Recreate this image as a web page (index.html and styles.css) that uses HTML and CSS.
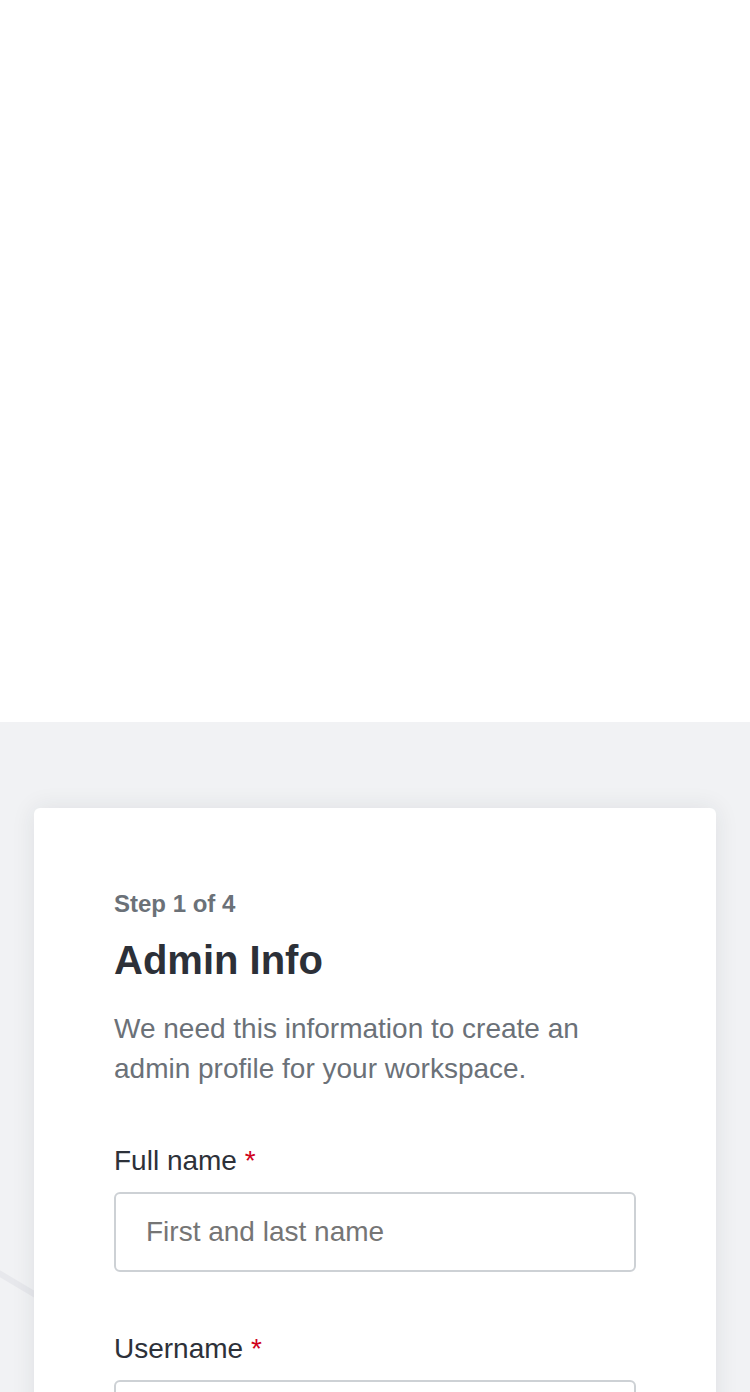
FILE: index.html
```html
<!DOCTYPE html>
<html lang="en">
<head>
<meta charset="utf-8">
<title>Admin Info</title>
<link rel="stylesheet" href="styles.css">
</head>
<body>
<div class="hero"></div>
<main class="stage">
  <svg class="deco" width="750" height="670" viewBox="0 0 750 670" aria-hidden="true">
    <line x1="-40" y1="528" x2="400" y2="790" stroke="#e7e8ec" stroke-width="6"/>
  </svg>
  <section class="card">
    <p class="step">Step 1 of 4</p>
    <h1 class="title">Admin Info</h1>
    <p class="desc">We need this information to create an admin profile for your workspace.</p>
    <div class="field">
      <label class="label" for="fullname">Full name <span class="req">*</span></label>
      <input class="input" id="fullname" type="text" placeholder="First and last name">
    </div>
    <div class="field">
      <label class="label" for="username">Username <span class="req">*</span></label>
      <input class="input" id="username" type="text">
    </div>
  </section>
</main>
</body>
</html>
```
FILE: styles.css
```css
html, body {
  margin: 0;
  padding: 0;
}
body {
  font-family: "Liberation Sans", Arial, sans-serif;
  background: #f1f2f4;
}
.hero {
  height: 722px;
  background: #ffffff;
}
.stage {
  position: relative;
  background: #f1f2f4;
  padding: 86px 34px 80px;
  overflow: hidden;
}
.deco {
  position: absolute;
  left: 0;
  top: 0;
  z-index: 0;
}
.card {
  position: relative;
  z-index: 1;
  background: #ffffff;
  border-radius: 6px;
  box-shadow: 0 0 24px rgba(30, 40, 60, 0.09);
  padding: 80px 80px 80px;
}
.step {
  margin: 0;
  font-size: 24px;
  line-height: 32px;
  font-weight: 700;
  color: #6b7178;
}
.title {
  margin: 16px 0 0;
  font-size: 40px;
  line-height: 48px;
  font-weight: 700;
  color: #2c3038;
}
.desc {
  margin: 25px 0 0;
  font-size: 28px;
  line-height: 40px;
  color: #6b7178;
}
.field {
  margin-top: 52px;
}
.field + .field {
  margin-top: 57px;
}
.label {
  display: block;
  font-size: 28px;
  line-height: 40px;
  color: #2d3139;
}
.req {
  color: #d0021b;
}
.input {
  display: block;
  box-sizing: border-box;
  width: 100%;
  height: 80px;
  margin-top: 11px;
  padding: 0 30px;
  border: 2px solid #cdd1d5;
  border-radius: 6px;
  background: #ffffff;
  font-family: "Liberation Sans", Arial, sans-serif;
  font-size: 28px;
  color: #2d3139;
  outline: none;
}
.input::placeholder {
  color: #757575;
}
```
